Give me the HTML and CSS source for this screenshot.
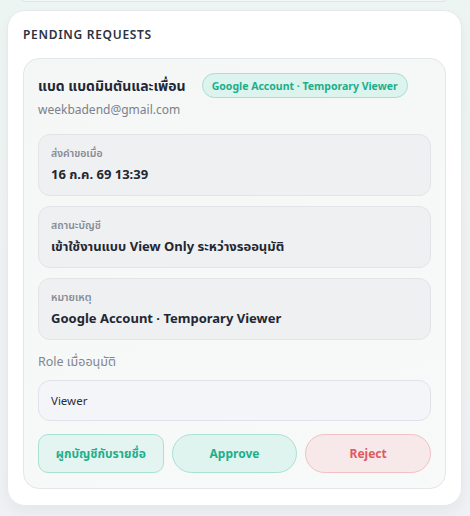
FILE: index.html
```html
<!DOCTYPE html>
<html lang="th">
<head>
<meta charset="utf-8">
<link rel="stylesheet" href="styles.css">
</head>
<body>
<div class="page">
  <div class="prev-card"></div>
  <section class="panel">
    <h2 class="panel-title">PENDING REQUESTS</h2>
    <div class="request">
      <div class="req-head">
        <span class="req-name">แบด แบดมินตันและเพื่อน</span>
        <span class="badge">Google Account · Temporary Viewer</span>
      </div>
      <div class="req-email">weekbadend@gmail.com</div>
      <div class="fields">
        <div class="field">
          <div class="field-label">ส่งคำขอเมื่อ</div>
          <div class="field-value">16 ก.ค. 69 13:39</div>
        </div>
        <div class="field">
          <div class="field-label">สถานะบัญชี</div>
          <div class="field-value">เข้าใช้งานแบบ View Only ระหว่างรออนุมัติ</div>
        </div>
        <div class="field">
          <div class="field-label">หมายเหตุ</div>
          <div class="field-value">Google Account · Temporary Viewer</div>
        </div>
      </div>
      <div class="role-label">Role เมื่ออนุมัติ</div>
      <div class="role-input">Viewer</div>
      <div class="actions">
        <button class="btn btn-link">ผูกบัญชีกับรายชื่อ</button>
        <button class="btn btn-approve">Approve</button>
        <button class="btn btn-reject">Reject</button>
      </div>
    </div>
  </section>
</div>
</body>
</html>
```
FILE: styles.css
```css
* { box-sizing: border-box; }
html, body { margin: 0; padding: 0; }
body {
  width: 470px;
  height: 516px;
  overflow: hidden;
  font-family: "Noto Sans", "Noto Sans Thai", "DejaVu Sans", sans-serif;
  background: linear-gradient(180deg, #edf5f2 0%, #f0f3f3 50%, #f0f1f4 100%);
  color: #1f2430;
}
.page {
  position: relative;
  padding: 10px 8px 0 7px;
}
.prev-card {
  position: absolute;
  left: 16px;
  right: 18px;
  top: -12px;
  height: 14px;
  background: #f3f6f6;
  border: 1px solid #dfe3ec;
  border-radius: 0 0 10px 10px;
}
.panel {
  width: 455px;
  background: #ffffff;
  border: 1px solid #e6eaf0;
  border-radius: 18px;
  padding: 16px 15px 16px 15px;
  box-shadow: 0 6px 14px rgba(30, 40, 70, 0.05);
}
.panel-title {
  margin: 0 0 15px 0;
  font-size: 12px;
  line-height: 16px;
  font-weight: 600;
  letter-spacing: 0.7px;
  color: #2c3340;
}
.request {
  background: linear-gradient(160deg, #f5f6f6 0%, #f8f9f9 100%);
  border: 1px solid #e3e6ea;
  border-radius: 16px;
  padding: 14px 14px 15px 14px;
}
.req-head {
  display: flex;
  align-items: center;
  gap: 16px;
  height: 25px;
}
.req-name {
  font-size: 14px;
  font-weight: 700;
  color: #222733;
  line-height: 20px;
}
.badge {
  display: inline-flex;
  align-items: center;
  height: 25px;
  padding: 0 9px;
  border-radius: 13px;
  background: #ddf3ee;
  border: 1px solid #a8dfd0;
  color: #1cae8a;
  font-size: 10.5px;
  font-weight: 700;
}
.req-email {
  margin-top: 3px;
  font-size: 12px;
  line-height: 18px;
  color: #7b818c;
}
.fields {
  margin-top: 15px;
  display: flex;
  flex-direction: column;
  gap: 10px;
}
.field {
  background: #eff0f2;
  border: 1px solid #e2e4e8;
  border-radius: 12px;
  padding: 11px 12px 11px 12px;
}
.field-label {
  font-size: 10.5px;
  line-height: 14px;
  font-weight: 600;
  color: #868b94;
}
.field-value {
  margin-top: 4px;
  font-size: 13px;
  line-height: 20px;
  font-weight: 700;
  color: #222733;
}
.role-label {
  margin-top: 13px;
  font-size: 12.5px;
  line-height: 18px;
  color: #80868f;
}
.role-input {
  margin-top: 9px;
  height: 41px;
  display: flex;
  align-items: center;
  padding: 0 12px;
  background: #f4f5f9;
  border: 1px solid #e0e3eb;
  border-radius: 12px;
  font-size: 11.5px;
  color: #2a2f3a;
}
.actions {
  margin-top: 13px;
  display: grid;
  grid-template-columns: 1fr 1fr 1fr;
  gap: 8px;
}
.btn {
  height: 39px;
  font-family: inherit;
  font-size: 12px;
  font-weight: 700;
  cursor: pointer;
}
.btn-link {
  border-radius: 10px;
  background: #e3f4f1;
  border: 1px solid #a9e2d3;
  color: #1fae8a;
}
.btn-approve {
  border-radius: 20px;
  background: #dff3ef;
  border: 1px solid #a9e2d3;
  color: #1fae8a;
}
.btn-reject {
  border-radius: 20px;
  background: #f7e8e9;
  border: 1px solid #f1c1c3;
  color: #e05a5f;
}
```
